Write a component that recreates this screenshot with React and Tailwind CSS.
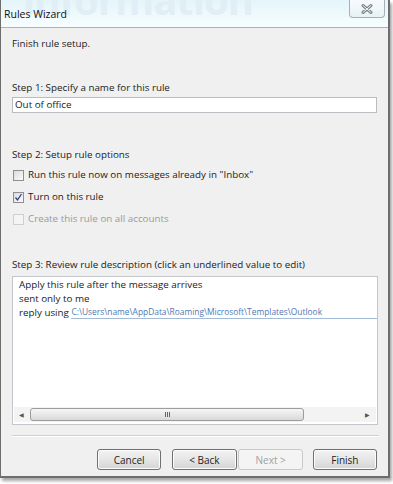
import React from 'react';

const font = { fontFamily: '"Open Sans", "Liberation Sans", sans-serif' };

function Check({ checked, disabled }) {
    return (
        <span className={`w-[11px] h-[11px] border flex items-center justify-center shrink-0 ${disabled ? 'border-[#cfcfcf] bg-[#f4f4f4]' : 'border-[#8e8f8f] bg-gradient-to-br from-[#dcdcdc] to-[#fbfbfb]'}`}>
            {checked && (
                <svg width="9" height="9" viewBox="0 0 9 9">
                    <path d="M1.5 4.5 L3.5 7 L7.5 1" fill="none" stroke="#2b3f8c" strokeWidth="1.3" />
                </svg>
            )}
        </span>
    );
}

function Btn({ children, disabled }) {
    return (
        <button
            className={`w-[65px] h-[21px] rounded-[3px] border text-[10px] leading-none flex items-center justify-center ${disabled ? 'border-[#c9c9c9] bg-[#f4f4f4] text-[#a0a0a0]' : 'border-[#707070] bg-gradient-to-b from-[#f3f3f3] via-[#e6e6e6] to-[#d4d4d4] text-[#1c1c1c] shadow-[inset_0_0_0_1px_#fcfcfc]'}`}
        >
            {children}
        </button>
    );
}

export default function App() {
    return (
        <div className="w-[393px] h-[484px] bg-white overflow-hidden" style={font}>
            <div className="w-[390px] h-[478px] flex flex-col border-l border-r-2 border-b-2 border-[#6d6d6d] shadow-[2px_3px_3px_rgba(0,0,0,0.35)]">
                {/* title bar */}
                <div className="h-[28px] shrink-0 relative overflow-hidden bg-gradient-to-b from-[#e4f5fa] to-[#f7fdff] border-b border-[#a9b3b8] flex items-center pl-[3px]">
                    <span aria-hidden="true" className="absolute left-[22px] top-[-24px] text-[40px] leading-[48px] font-bold text-[#e2eef5] tracking-tight select-none">information</span>
                    <span className="relative text-[10.5px] text-[#111] mt-[2px]">Rules Wizard</span>
                    <div className="absolute right-[3px] top-0 w-[36px] h-[18px] border border-t-0 border-[#a7b0b6] rounded-b-[4px] bg-gradient-to-b from-[#f7fbfd] to-[#e9f1f5] flex items-center justify-center">
                        <svg width="12" height="10" viewBox="0 0 12 10">
                            <path d="M2 1.5 L10 8.5 M10 1.5 L2 8.5" stroke="#7d8689" strokeWidth="3" strokeLinecap="round" />
                            <path d="M2 1.5 L10 8.5 M10 1.5 L2 8.5" stroke="#f2f5f6" strokeWidth="1" strokeLinecap="round" />
                        </svg>
                    </div>
                </div>

                {/* body */}
                <div className="flex-1 bg-[#f0f0f0] px-[11px] text-[9.8px] leading-[14px] text-[#1a1a1a] flex flex-col">
                    <div className="mt-[9px]">Finish rule setup.</div>

                    <div className="mt-[30px]">Step 1: Specify a name for this rule</div>
                    <div className="mt-[2px] w-[365px] h-[16px] bg-white border border-[#b9bcc0] px-[2px] flex items-center">Out of office</div>

                    <div className="mt-[35px]">Step 2: Setup rule options</div>
                    <div className="mt-[2px] flex flex-col">
                        <div className="h-[22px] flex items-center gap-[4px] pl-[1px]">
                            <Check />
                            <span>Run this rule now on messages already in "Inbox"</span>
                        </div>
                        <div className="h-[22px] flex items-center gap-[4px] pl-[1px]">
                            <Check checked />
                            <span>Turn on this rule</span>
                        </div>
                        <div className="h-[22px] flex items-center gap-[4px] pl-[1px] text-[#9a9a9a]">
                            <Check disabled />
                            <span>Create this rule on all accounts</span>
                        </div>
                    </div>

                    <div className="mt-[28px]">Step 3: Review rule description (click an underlined value to edit)</div>
                    <div className="mt-[4px] w-[366px] h-[149px] bg-white border border-[#c3c6ca] flex flex-col">
                        <div className="flex-1 pl-[6px] pt-[1px]">
                            <div>Apply this rule after the message arrives</div>
                            <div>sent only to me</div>
                            <div className="flex items-end">
                                <span className="whitespace-nowrap">reply using&nbsp;</span>
                                <span className="flex-1 whitespace-nowrap overflow-hidden text-[8.4px] text-[#4d79b3] border-b border-[#a4bbd8] leading-[12px] mb-[1px]">
                                    C:\Users\name\AppData\Roaming\Microsoft\Templates\Outlook
                                </span>
                            </div>
                        </div>
                        {/* horizontal scrollbar */}
                        <div className="h-[15px] mb-[2px] mx-[1px] bg-[#f3f3f3] flex items-center">
                            <span className="w-[14px] flex justify-center text-[6px] text-[#555]">◀</span>
                            <div className="ml-[2px] w-[274px] h-[13px] rounded-[3px] border border-[#9c9c9c] bg-gradient-to-b from-[#f6f6f6] to-[#d9d9d9] flex items-center justify-center">
                                <span className="flex gap-[1px]">
                                    <span className="w-[1px] h-[5px] bg-[#666]"></span>
                                    <span className="w-[1px] h-[5px] bg-[#666]"></span>
                                    <span className="w-[1px] h-[5px] bg-[#666]"></span>
                                </span>
                            </div>
                            <div className="flex-1"></div>
                            <span className="w-[14px] flex justify-center text-[6px] text-[#555] mr-[2px]">▶</span>
                        </div>
                    </div>

                    <div className="mt-[10px] w-[367px] h-[2px] border-t border-[#d0d0d0] border-b border-b-white"></div>

                    <div className="mt-[12px] ml-[85px] flex">
                        <Btn>Cancel</Btn>
                        <div className="w-[11px]"></div>
                        <Btn>&lt; Back</Btn>
                        <div className="w-[2px]"></div>
                        <Btn disabled>Next &gt;</Btn>
                        <div className="w-[10px]"></div>
                        <Btn>Finish</Btn>
                    </div>
                </div>
            </div>
        </div>
    );
}
